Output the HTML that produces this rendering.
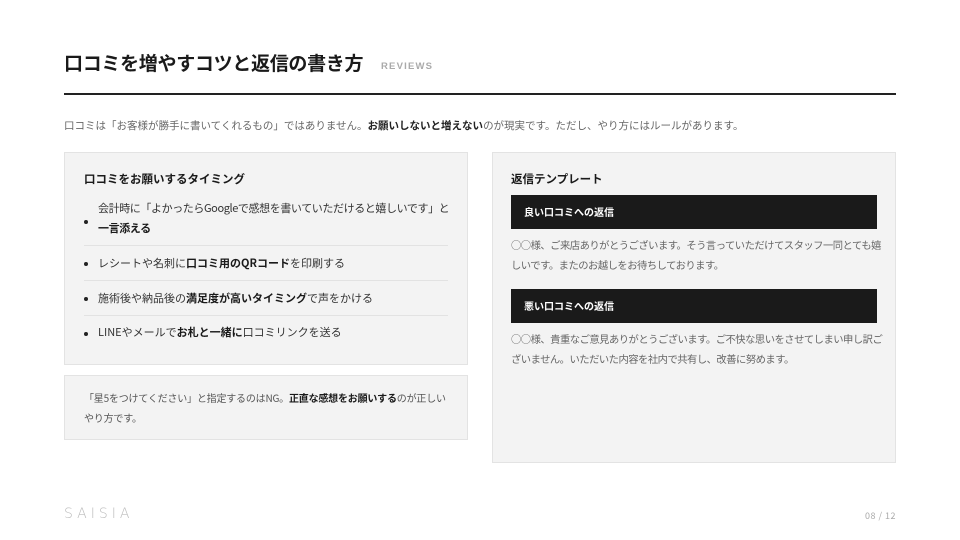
<!DOCTYPE html>
<html><head><meta charset="utf-8"><style>
*{margin:0;padding:0;box-sizing:border-box}
body{width:960px;height:540px;background:#fff;position:relative;overflow:hidden;font-family:"Noto Sans CJK JP","Liberation Sans",sans-serif;color:#222}
.abs{position:absolute}
h1{position:absolute;left:64px;top:48px;font-size:19px;font-weight:700;color:#1a1a1a;letter-spacing:-0.3px;line-height:30px}
.sub{position:absolute;left:381px;top:61px;font-size:9.5px;color:#aaa;letter-spacing:1.2px;font-weight:700;font-family:"Liberation Sans",sans-serif}
.rule{position:absolute;left:64px;top:93px;width:832px;height:1.5px;background:#222}
.intro{position:absolute;left:64px;top:117px;font-size:10.5px;color:#666;line-height:18px;white-space:nowrap}
.intro b{color:#222}
.card{position:absolute;background:#f3f3f3;border:1px solid #e3e3e3}
.h{font-size:11.5px;font-weight:700;color:#1a1a1a}
ul{list-style:none}
li{position:relative;padding-left:14px;font-size:11px;color:#333;border-bottom:1px solid #e2e2e2;white-space:nowrap}
li:last-child{border-bottom:none}
li:before{content:"";position:absolute;left:0;top:50%;width:4px;height:4px;background:#222;border-radius:50%;margin-top:-1px}
li b{color:#1a1a1a}
.bar{background:#1a1a1a;color:#fff;font-size:10px;font-weight:700;height:34px;line-height:34px;padding-left:13px}
.p{font-size:10.3px;color:#666;line-height:20px;white-space:nowrap;letter-spacing:-0.5px}
</style></head><body>
<h1>口コミを増やすコツと返信の書き方</h1>
<div class="sub">REVIEWS</div>
<div class="rule"></div>
<div class="intro">口コミは「お客様が勝手に書いてくれるもの」ではありません。<b>お願いしないと増えない</b>のが現実です。ただし、やり方にはルールがあります。</div>

<div class="card" style="left:64px;top:152px;width:404px;height:213px;padding:16px 19px 0 19px">
<div class="h" style="line-height:20px">口コミをお願いするタイミング</div>
<ul style="margin-top:7px">
<li style="line-height:20px;padding-top:2px;padding-bottom:7px;letter-spacing:-0.4px">会計時に「よかったらGoogleで感想を書いていただけると嬉しいです」と<br><b>一言添える</b></li>
<li style="line-height:18px;padding:8px 0 8px 14px">レシートや名刺に<b>口コミ用のQRコード</b>を印刷する</li>
<li style="line-height:18px;padding:8px 0 8px 14px">施術後や納品後の<b>満足度が高いタイミング</b>で声をかける</li>
<li style="line-height:18px;padding:7px 0 8px 14px">LINEやメールで<b>お札と一緒に</b>口コミリンクを送る</li>
</ul>
</div>

<div class="card" style="left:64px;top:375px;width:404px;height:65px;padding:12px 19px">
<div style="font-size:10px;color:#555;line-height:20px;white-space:nowrap;letter-spacing:-0.2px">「星5をつけてください」と指定するのはNG。<b style="color:#1a1a1a">正直な感想をお願いする</b>のが正しい<br>やり方です。</div>
</div>

<div class="card" style="left:492px;top:152px;width:404px;height:311px;padding:16px 18px 0 18px">
<div class="h" style="line-height:20px">返信テンプレート</div>
<div class="bar" style="margin-top:6px">良い口コミへの返信</div>
<div class="p" style="margin-top:6px">○○様、ご来店ありがとうございます。そう言っていただけてスタッフ一同とても嬉<br>しいです。またのお越しをお待ちしております。</div>
<div class="bar" style="margin-top:14px">悪い口コミへの返信</div>
<div class="p" style="margin-top:6px">○○様、貴重なご意見ありがとうございます。ご不快な思いをさせてしまい申し訳ご<br>ざいません。いただいた内容を社内で共有し、改善に努めます。</div>
</div>

<div class="abs" style="left:64px;top:506px;font-size:14px;color:#bbb;letter-spacing:4px;font-family:'DejaVu Sans',sans-serif;font-weight:200">SAISIA</div>
<div class="abs" style="right:64px;top:509px;font-size:9px;color:#aaa;letter-spacing:0.5px">08 / 12</div>
</body></html>
